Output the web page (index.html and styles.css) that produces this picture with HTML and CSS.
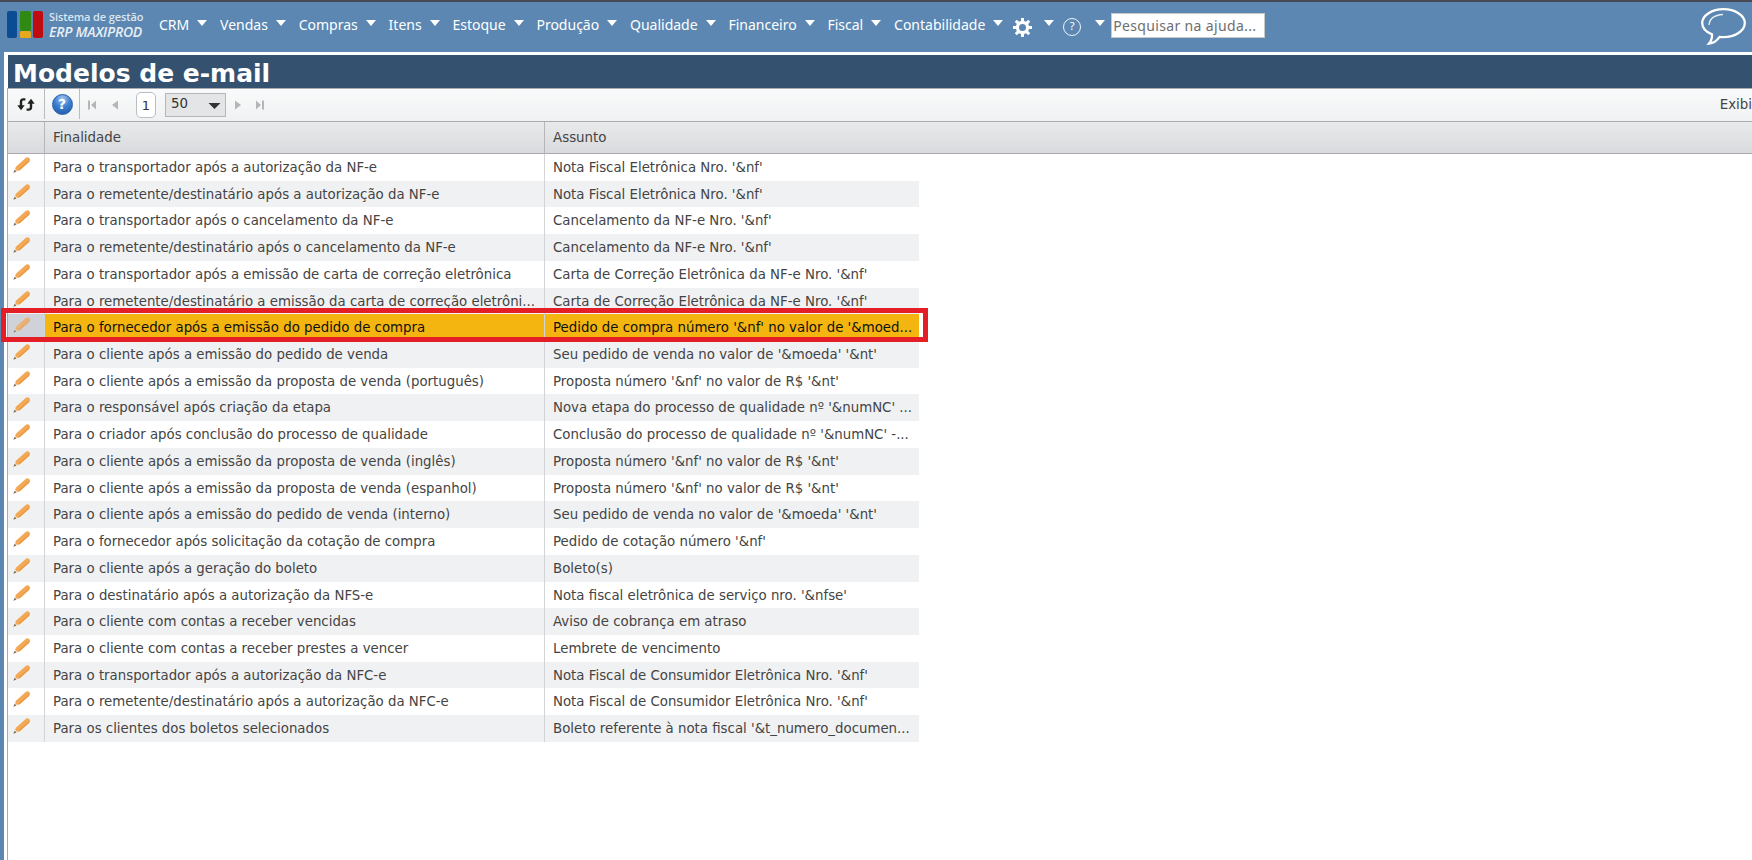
FILE: index.html
```html
<!DOCTYPE html>
<html lang="pt-BR">
<head>
<meta charset="utf-8">
<title>Modelos de e-mail</title>
<link rel="stylesheet" href="styles.css">
</head>
<body>
<svg class="defs" width="0" height="0" aria-hidden="true">
  <symbol id="pencil" viewBox="0 0 17 16">
    <path d="M3.4 9.1 7 13.1 0.4 15.8Z" fill="#f3d7b5"/>
    <path d="M0.4 15.8 1.7 12.8 3.4 14.4Z" fill="#7a6a5a"/>
    <path d="M5.2 11.1 14.4 3" stroke="#f2a855" stroke-width="5.2" stroke-linecap="round" fill="none"/>
    <path d="M6.6 12.4 15.4 4.6" stroke="#ec9a45" stroke-width="1.4" stroke-linecap="round" fill="none"/>
  </symbol>
  <symbol id="caret" viewBox="0 0 10 6">
    <path d="M0 0H10L5 6Z" fill="#fff"/>
  </symbol>
</svg>

<header class="topbar">
  <div class="logo">
    <svg class="logo-mark" width="37" height="28" viewBox="0 0 37 28">
      <rect x="0" y="0" width="10" height="27" rx="2" fill="#0c4c92"/>
      <rect x="13" y="0" width="11" height="20" rx="1.5" fill="#2f8a14"/>
      <rect x="13" y="20" width="11" height="7" rx="1.5" fill="#e7a81a"/>
      <rect x="26" y="0" width="10" height="27" rx="2" fill="#c00c10"/>
    </svg>
    <div class="logo-text">
      <span class="logo-line1">Sistema de gestão</span>
      <span class="logo-line2">ERP MAXIPROD</span>
    </div>
  </div>
  <nav class="menu">
    <a class="menu-item">CRM<svg class="caret"><use href="#caret"/></svg></a>
    <a class="menu-item">Vendas<svg class="caret"><use href="#caret"/></svg></a>
    <a class="menu-item">Compras<svg class="caret"><use href="#caret"/></svg></a>
    <a class="menu-item">Itens<svg class="caret"><use href="#caret"/></svg></a>
    <a class="menu-item">Estoque<svg class="caret"><use href="#caret"/></svg></a>
    <a class="menu-item">Produção<svg class="caret"><use href="#caret"/></svg></a>
    <a class="menu-item">Qualidade<svg class="caret"><use href="#caret"/></svg></a>
    <a class="menu-item">Financeiro<svg class="caret"><use href="#caret"/></svg></a>
    <a class="menu-item">Fiscal<svg class="caret"><use href="#caret"/></svg></a>
    <a class="menu-item">Contabilidade<svg class="caret"><use href="#caret"/></svg></a>
    <a class="menu-item icon-item">
      <svg class="gear" width="19" height="19" viewBox="0 0 19 19">
        <circle cx="9.5" cy="9.5" r="5.1" fill="none" stroke="#fff" stroke-width="3.2"/>
        <path d="M9.5 0V4M9.5 15V19M0 9.5H4M15 9.5H19M2.8 2.8 5.6 5.6M13.4 13.4 16.2 16.2M16.2 2.8 13.4 5.6M5.6 13.4 2.8 16.2" stroke="#fff" stroke-width="3"/>
      </svg>
      <svg class="caret"><use href="#caret"/></svg>
    </a>
    <a class="menu-item icon-item help-item">
      <span class="help-mark">?</span>
      <svg class="caret"><use href="#caret"/></svg>
    </a>
  </nav>
  <div class="help-search">Pesquisar na ajuda...</div>
  <svg class="chat" width="45" height="37" viewBox="0 0 45 37">
    <path d="M22.5 1.2C34 1.2 43.8 7.2 43.8 15S34 29.2 22.5 29.2C21 29.2 19.8 29.1 18.6 28.9 16.5 32 12.5 35.2 8 35.6 10 33.2 11.2 29.6 11 26.4 5 24 1.2 19.8 1.2 15 1.2 7.2 11 1.2 22.5 1.2Z" fill="none" stroke="#fff" stroke-width="2.3"/>
    <path d="M8 17C8.5 10.5 13.5 7 22 6.5" fill="none" stroke="#fff" stroke-width="1.4" opacity=".85"/>
  </svg>
</header>

<main class="page">
  <h1 class="title">Modelos de e-mail</h1>

  <div class="toolbar">
    <div class="tool tool-refresh">
      <svg width="18" height="15" viewBox="0 0 18 15">
        <path d="M8.4 2.4H6.4C4.8 2.4 4 3.4 4 4.8V9" fill="none" stroke="#222" stroke-width="2.4"/>
        <path d="M0.3 8.2H7.7L4 13.2Z" fill="#222"/>
        <path d="M9.6 12.6H11.6C13.2 12.6 14 11.6 14 10.2V6" fill="none" stroke="#222" stroke-width="2.4"/>
        <path d="M10.3 6.8H17.7L14 1.8Z" fill="#222"/>
      </svg>
    </div>
    <div class="tool tool-help"><span class="help-ball">?</span></div>
    <div class="pager">
      <svg class="pager-icon" width="8" height="10" viewBox="0 0 8 9"><path d="M0 0H2V9H0ZM8 0V9L3 4.5Z" fill="#b4b7ba"/></svg>
      <svg class="pager-icon prev" width="6" height="10" viewBox="0 0 6 9"><path d="M6 0V9L0 4.5Z" fill="#b4b7ba"/></svg>
      <span class="page-num">1</span>
      <span class="page-size">50<svg class="select-caret" width="13" height="6" viewBox="0 0 12 6"><path d="M0 0H12L6 6Z" fill="#333"/></svg></span>
      <svg class="pager-icon next" width="6" height="10" viewBox="0 0 6 9"><path d="M0 0V9L6 4.5Z" fill="#b4b7ba"/></svg>
      <svg class="pager-icon last" width="8" height="10" viewBox="0 0 8 9"><path d="M0 0V9L5 4.5ZM6 0H8V9H6Z" fill="#b4b7ba"/></svg>
    </div>
    <span class="exibi">Exibi</span>
  </div>

  <div class="grid-head">
    <div class="head-icon"></div>
    <div class="head-cell head-fin">Finalidade</div>
    <div class="head-cell head-ass">Assunto</div>
  </div>

  <div class="rows">
    <div class="row"><span class="c-icon"><svg class="pencil"><use href="#pencil"/></svg></span><span class="c-fin">Para o transportador após a autorização da NF-e</span><span class="c-ass">Nota Fiscal Eletrônica Nro. '&amp;nf'</span></div>
    <div class="row"><span class="c-icon"><svg class="pencil"><use href="#pencil"/></svg></span><span class="c-fin">Para o remetente/destinatário após a autorização da NF-e</span><span class="c-ass">Nota Fiscal Eletrônica Nro. '&amp;nf'</span></div>
    <div class="row"><span class="c-icon"><svg class="pencil"><use href="#pencil"/></svg></span><span class="c-fin">Para o transportador após o cancelamento da NF-e</span><span class="c-ass">Cancelamento da NF-e Nro. '&amp;nf'</span></div>
    <div class="row"><span class="c-icon"><svg class="pencil"><use href="#pencil"/></svg></span><span class="c-fin">Para o remetente/destinatário após o cancelamento da NF-e</span><span class="c-ass">Cancelamento da NF-e Nro. '&amp;nf'</span></div>
    <div class="row"><span class="c-icon"><svg class="pencil"><use href="#pencil"/></svg></span><span class="c-fin">Para o transportador após a emissão de carta de correção eletrônica</span><span class="c-ass">Carta de Correção Eletrônica da NF-e Nro. '&amp;nf'</span></div>
    <div class="row"><span class="c-icon"><svg class="pencil"><use href="#pencil"/></svg></span><span class="c-fin">Para o remetente/destinatário a emissão da carta de correção eletrôni...</span><span class="c-ass">Carta de Correção Eletrônica da NF-e Nro. '&amp;nf'</span></div>
    <div class="row selected"><span class="c-icon"><svg class="pencil"><use href="#pencil"/></svg></span><span class="c-fin">Para o fornecedor após a emissão do pedido de compra</span><span class="c-ass">Pedido de compra número '&amp;nf' no valor de '&amp;moed...</span></div>
    <div class="row"><span class="c-icon"><svg class="pencil"><use href="#pencil"/></svg></span><span class="c-fin">Para o cliente após a emissão do pedido de venda</span><span class="c-ass">Seu pedido de venda no valor de '&amp;moeda' '&amp;nt'</span></div>
    <div class="row"><span class="c-icon"><svg class="pencil"><use href="#pencil"/></svg></span><span class="c-fin">Para o cliente após a emissão da proposta de venda (português)</span><span class="c-ass">Proposta número '&amp;nf' no valor de R$ '&amp;nt'</span></div>
    <div class="row"><span class="c-icon"><svg class="pencil"><use href="#pencil"/></svg></span><span class="c-fin">Para o responsável após criação da etapa</span><span class="c-ass">Nova etapa do processo de qualidade nº '&amp;numNC' ...</span></div>
    <div class="row"><span class="c-icon"><svg class="pencil"><use href="#pencil"/></svg></span><span class="c-fin">Para o criador após conclusão do processo de qualidade</span><span class="c-ass">Conclusão do processo de qualidade nº '&amp;numNC' -...</span></div>
    <div class="row"><span class="c-icon"><svg class="pencil"><use href="#pencil"/></svg></span><span class="c-fin">Para o cliente após a emissão da proposta de venda (inglês)</span><span class="c-ass">Proposta número '&amp;nf' no valor de R$ '&amp;nt'</span></div>
    <div class="row"><span class="c-icon"><svg class="pencil"><use href="#pencil"/></svg></span><span class="c-fin">Para o cliente após a emissão da proposta de venda (espanhol)</span><span class="c-ass">Proposta número '&amp;nf' no valor de R$ '&amp;nt'</span></div>
    <div class="row"><span class="c-icon"><svg class="pencil"><use href="#pencil"/></svg></span><span class="c-fin">Para o cliente após a emissão do pedido de venda (interno)</span><span class="c-ass">Seu pedido de venda no valor de '&amp;moeda' '&amp;nt'</span></div>
    <div class="row"><span class="c-icon"><svg class="pencil"><use href="#pencil"/></svg></span><span class="c-fin">Para o fornecedor após solicitação da cotação de compra</span><span class="c-ass">Pedido de cotação número '&amp;nf'</span></div>
    <div class="row"><span class="c-icon"><svg class="pencil"><use href="#pencil"/></svg></span><span class="c-fin">Para o cliente após a geração do boleto</span><span class="c-ass">Boleto(s)</span></div>
    <div class="row"><span class="c-icon"><svg class="pencil"><use href="#pencil"/></svg></span><span class="c-fin">Para o destinatário após a autorização da NFS-e</span><span class="c-ass">Nota fiscal eletrônica de serviço nro. '&amp;nfse'</span></div>
    <div class="row"><span class="c-icon"><svg class="pencil"><use href="#pencil"/></svg></span><span class="c-fin">Para o cliente com contas a receber vencidas</span><span class="c-ass">Aviso de cobrança em atraso</span></div>
    <div class="row"><span class="c-icon"><svg class="pencil"><use href="#pencil"/></svg></span><span class="c-fin">Para o cliente com contas a receber prestes a vencer</span><span class="c-ass">Lembrete de vencimento</span></div>
    <div class="row"><span class="c-icon"><svg class="pencil"><use href="#pencil"/></svg></span><span class="c-fin">Para o transportador após a autorização da NFC-e</span><span class="c-ass">Nota Fiscal de Consumidor Eletrônica Nro. '&amp;nf'</span></div>
    <div class="row"><span class="c-icon"><svg class="pencil"><use href="#pencil"/></svg></span><span class="c-fin">Para o remetente/destinatário após a autorização da NFC-e</span><span class="c-ass">Nota Fiscal de Consumidor Eletrônica Nro. '&amp;nf'</span></div>
    <div class="row"><span class="c-icon"><svg class="pencil"><use href="#pencil"/></svg></span><span class="c-fin">Para os clientes dos boletos selecionados</span><span class="c-ass">Boleto referente à nota fiscal '&amp;t_numero_documen...</span></div>
    <div class="highlight-box"></div>
  </div>
</main>
</body>
</html>
```

FILE: styles.css
```css
* { box-sizing: border-box; }
html, body { margin: 0; height: 100%; }
body {
  width: 1752px;
  height: 860px;
  overflow: hidden;
  background: #5b87b2;
  font-family: "DejaVu Sans", Verdana, sans-serif;
  display: flex;
  flex-direction: column;
}
.defs { position: absolute; }

/* top bar */
.topbar {
  height: 52px;
  flex: none;
  background: #5b87b2;
  border-top: 2px solid #474a55;
  display: flex;
  align-items: flex-start;
  padding: 9px 0 0 7px;
}
.logo { display: flex; width: 152px; flex: none; }
.logo-mark { flex: none; }
.logo-text {
  display: flex;
  flex-direction: column;
  margin-left: 5px;
  margin-top: -2px;
  font-family: "Open Sans", sans-serif;
  color: #dbe5ef;
  white-space: nowrap;
}
.logo-line1 { font-size: 11px; line-height: 15px; font-weight: 600; letter-spacing: -0.1px; }
.logo-line2 { font-size: 14px; line-height: 15px; font-style: italic; font-weight: 600; letter-spacing: -0.25px; color: #e8eef5; }

.menu { display: flex; align-items: center; height: 32px; margin-top: -2px; }
.menu-item {
  display: flex;
  align-items: center;
  color: #fff;
  font-family: "Noto Sans", sans-serif;
  font-size: 14px;
  line-height: 18px;
  white-space: nowrap;
  margin-right: 12.8px;
}
.caret { width: 10px; height: 6px; margin-left: 8px; margin-top: -5px; flex: none; }
.icon-item { margin-right: 9px; }
.gear { flex: none; margin-left: -3px; margin-top: 4px; }
.icon-item .caret { margin-left: 12px; }
.help-mark {
  width: 18px;
  height: 18px;
  border: 1.7px solid #f2f5f8;
  border-radius: 50%;
  font-size: 11px;
  line-height: 14px;
  text-align: center;
  margin-top: 4px;
  flex: none;
}
.help-item { margin-right: 6px; }
.help-item .caret { margin-left: 14px; }
.help-search {
  width: 154px;
  height: 25px;
  margin-top: 2px;
  background: #fff;
  border: 1px solid #c9c9c9;
  color: #6e6e6e;
  font-family: "Noto Sans", sans-serif;
  font-size: 14px;
  line-height: 23px;
  padding-left: 1px;
  letter-spacing: .35px;
  white-space: nowrap;
}
.chat { margin: -3px 6px 0 auto; flex: none; }

/* page */
.page {
  flex: 1;
  min-height: 0;
  margin-left: 4px;
  background: #fff;
  padding: 3px 0 0 3px;
  display: flex;
  flex-direction: column;
}
.title {
  margin: 0 0 0 1px;
  height: 33px;
  flex: none;
  background: #34526f;
  color: #fff;
  font-size: 25px;
  line-height: 38px;
  font-weight: 700;
  padding-left: 5px;
  white-space: nowrap;
}
.toolbar, .grid-head, .rows { border-left: 1px solid #a9abb0; }
.toolbar {
  height: 34px;
  flex: none;
  display: flex;
  align-items: flex-start;
  border-top: 1px solid #a9abb0;
  border-bottom: 1px solid #a9abb0;
  background: linear-gradient(#f9fafa, #f0f1f2);
  overflow: hidden;
}
.tool {
  height: 30px;
  display: flex;
  align-items: center;
  justify-content: center;
  border-right: 1px solid #b9bbbf;
  flex: none;
}
.tool-refresh { width: 37px; }
.tool-help { width: 35px; }
.help-ball {
  width: 21px;
  height: 21px;
  border-radius: 50%;
  border: 1px solid #2b5fa8;
  background: radial-gradient(circle at 50% 20%, #a3c7f0, #3f7fd0 45%, #245fb0 85%);
  color: #fff;
  text-align: center;
  font-size: 14px;
  font-weight: 700;
  line-height: 19px;
}
.pager { display: flex; align-items: center; padding-left: 8px; height: 32px; }
.pager-icon { flex: none; }
.pager-icon.prev { margin-left: 16px; }
.page-num {
  width: 20px;
  height: 26px;
  margin-left: 18px;
  background: #fff;
  border: 1px solid #bbbdc0;
  border-radius: 5px;
  font-size: 13px;
  line-height: 26px;
  text-align: center;
  color: #333;
}
.page-size {
  width: 61px;
  height: 24px;
  margin-left: 9px;
  background: #e4e5e6;
  border: 1px solid #b4b6b9;
  font-size: 13.4px;
  line-height: 20px;
  color: #333;
  padding-left: 5px;
  display: flex;
  justify-content: space-between;
  align-items: flex-start;
}
.select-caret { margin: 9px 4px 0 0; }
.pager-icon.next { margin-left: 9px; }
.pager-icon.last { margin-left: 15px; }
.exibi {
  margin-left: auto;
  font-size: 13.4px;
  line-height: 32px;
  color: #444;
  white-space: nowrap;
}

/* grid */
.grid-head {
  height: 32px;
  flex: none;
  display: flex;
  background: linear-gradient(#e9eaeb, #d8dadd);
  border-bottom: 1px solid #a9abb0;
  font-size: 13.4px;
  line-height: 31px;
  color: #444;
}
.head-icon { width: 37px; flex: none; border-right: 1px solid #b4b6ba; }
.head-cell { padding-left: 8px; flex: none; }
.head-fin { width: 500px; border-right: 1px solid #b4b6ba; }
.head-ass { flex: 1; }

.rows { flex: 1; position: relative; }
.row {
  width: 911px;
  height: 26.72px;
  display: flex;
  align-items: center;
  font-size: 13.33px;
  color: #444;
  background: #fff;
}
.row:nth-child(even) { background: #f0f1f3; }
.row span { height: 100%; flex: none; }
.c-icon { width: 37px; border-right: 1px solid #d3d4d7; padding: 3px 0 0 5px; }
.pencil { display: block; width: 17px; height: 16px; }
.c-fin, .c-ass {
  padding: 0 8px;
  line-height: 27px;
  overflow: hidden;
  white-space: nowrap;
}
.c-fin { width: 500px; border-right: 1px solid #d3d4d7; }
.c-ass { width: 374px; }
.row.selected { background: #f5b510; color: #111; }
.row.selected .c-icon { background: #cfd3d9; }
.row.selected .pencil { opacity: .75; }
.highlight-box {
  position: absolute;
  left: -7px;
  top: 154px;
  width: 927px;
  height: 34px;
  border: 5px solid #e31e26;
  pointer-events: none;
}
```
